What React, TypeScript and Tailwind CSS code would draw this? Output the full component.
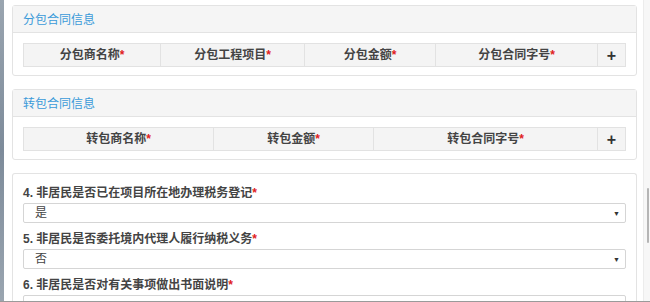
import * as React from "react"

const FONT = { fontFamily: '"Liberation Sans", "Noto Sans CJK SC", sans-serif' }

type Col = { label: string; w: number }

function Req() {
  return <span className="text-[#e02020]">*</span>
}

function ContractPanel(props: { title: string; cols: Col[] }) {
  const { title, cols } = props
  return (
    <div className="rounded-[3px] border border-[#e3e3e3] bg-white">
      <div className="h-[27px] border-b border-[#e3e3e3] bg-[#f5f5f5] px-[10px] pt-[6px] text-[12px] leading-[16px] text-[#3a9ad9]">
        {title}
      </div>
      <div className="px-[10px] pt-[10px] pb-[8px]">
        <table className="table-fixed border-collapse" style={{ width: 602 }}>
          <colgroup>
            {cols.map((c) => (
              <col key={c.label} style={{ width: c.w }} />
            ))}
            <col style={{ width: 28 }} />
          </colgroup>
          <thead>
            <tr className="h-[23px] bg-[#f4f4f4]">
              {cols.map((c) => (
                <th
                  key={c.label}
                  className="border border-[#e2e2e2] p-0 text-center text-[12px] font-bold leading-[21px] text-[#444]"
                >
                  {c.label}
                  <Req />
                </th>
              ))}
              <th className="border border-[#e2e2e2] p-0 text-center text-[16px] font-bold leading-[21px] text-[#333]">
                +
              </th>
            </tr>
          </thead>
        </table>
      </div>
    </div>
  )
}

function SelectField(props: { label: string; value: string; arrow?: boolean }) {
  return (
    <div>
      <div className="h-[16px] text-[12px] font-bold leading-[16px] text-[#444]">
        {props.label}
        <Req />
      </div>
      <div className="mt-[2px] flex h-[20px] items-center justify-between rounded-[2px] border border-[#d5d5d5] bg-white pl-[11px] pr-[5px] text-[12px] text-[#444]">
        <span>{props.value}</span>
        {props.arrow !== false && <span className="text-[7px] leading-none text-[#333]">▼</span>}
      </div>
    </div>
  )
}

export default function App() {
  return (
    <div className="flex h-[302px] w-[650px] overflow-hidden border-b border-[#9a9a9a] bg-white" style={FONT}>
      {/* blurred page edge behind the dialog */}
      <div className="w-[4px] shrink-0 bg-gradient-to-b from-[#9aa5b0] via-[#7d8b9a] to-[#9aa5b0]" />

      <div className="flex w-[639px] shrink-0 flex-col gap-[13px] pt-[5px] pl-[8px] pr-[6px]">
        <ContractPanel
          title="分包合同信息"
          cols={[
            { label: "分包商名称", w: 137 },
            { label: "分包工程项目", w: 144 },
            { label: "分包金额", w: 131 },
            { label: "分包合同字号", w: 162 },
          ]}
        />
        <ContractPanel
          title="转包合同信息"
          cols={[
            { label: "转包商名称", w: 190 },
            { label: "转包金额", w: 160 },
            { label: "转包合同字号", w: 224 },
          ]}
        />
        <div className="flex-1 rounded-[3px] border border-b-0 border-[#e3e3e3] bg-white px-[10px] pt-[11px]">
          <div className="flex flex-col gap-[8px]">
            <SelectField label="4. 非居民是否已在项目所在地办理税务登记" value="是" />
            <SelectField label="5. 非居民是否委托境内代理人履行纳税义务" value="否" />
            <SelectField label="6. 非居民是否对有关事项做出书面说明" value="" arrow={false} />
          </div>
        </div>
      </div>

      {/* scrollbar */}
      <div className="relative w-[7px] shrink-0 border-l border-[#ececec] bg-[#f7f7f7]">
        <div className="absolute top-[188px] left-[3px] h-[55px] w-[2px] rounded-full bg-[#b5b5b5]" />
      </div>
    </div>
  )
}
